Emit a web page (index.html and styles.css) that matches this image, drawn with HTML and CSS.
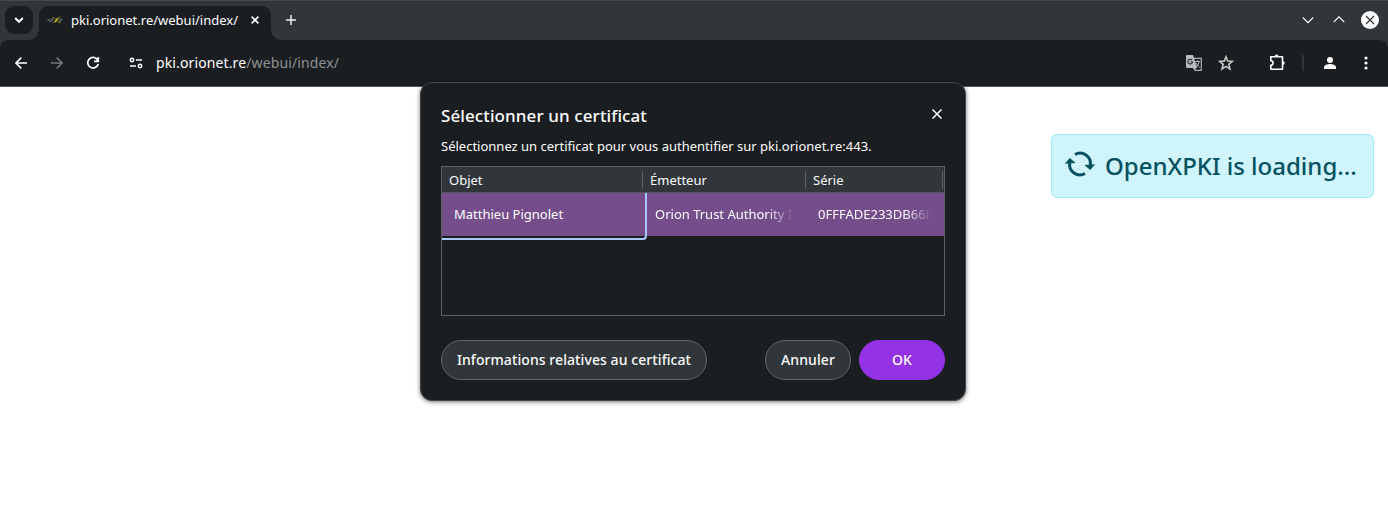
FILE: index.html
```
<!DOCTYPE html>
<html lang="fr">
<head>
<meta charset="utf-8">
<title>pki.orionet.re/webui/index/</title>
<link rel="stylesheet" href="styles.css">
</head>
<body>
<header class="tabstrip">
  <div class="tab-search"><svg width="10" height="8" viewBox="0 0 10 8"><path d="M1.2 2 5 5.8 8.8 2" fill="none" stroke="#fff" stroke-width="2"/></svg></div>
  <div class="tab">
    <svg class="favicon" width="16" height="16" viewBox="0 0 16 16" fill="none">
      <path d="M.5 8.300q2-2 4 0t-4 0M5 9V7.300h2M12 7.400h3.500M12 9h3" stroke="#666a6b"/>
      <path d="M5 5.500q3 0 4.500 2.500t4 3M6 10.800q2 0 4-3.300 1-2 3.500-2.500" stroke="#7b851c"/>
      <path d="m8 10 3-4" stroke="#c3b52c" stroke-width="1.500"/>
    </svg>
    <span class="tab-title">pki.orionet.re/webui/index/</span>
    <svg class="tab-close" width="8" height="8" viewBox="0 0 8 8"><path d="m.6.6 6.800 6.800M7.400.6.6 7.400" stroke="#fff" stroke-width="1.600"/></svg>
  </div>
  <svg class="new-tab" width="10" height="10" viewBox="0 0 10 10"><path d="M5 0v10M0 5h10" stroke="#f1f1f1" stroke-width="1.500"/></svg>
  <div class="window-buttons">
    <svg width="12" height="12" viewBox="0 0 12 12"><path d="M.8 3.500 6 8.700l5.200-5.200" fill="none" stroke="#fcfcfc" stroke-width="1.100"/></svg>
    <svg width="12" height="12" viewBox="0 0 12 12"><path d="M.8 8 6 2.800 11.200 8" fill="none" stroke="#fcfcfc" stroke-width="1.100"/></svg>
    <svg class="window-close" width="18" height="18" viewBox="0 0 18 18"><circle cx="9" cy="9" r="9" fill="#fcfcfc"/><path d="m5 5 8 8m0-8-8 8" stroke="#31363b" stroke-width="1.200"/></svg>
  </div>
</header>
<nav class="toolbar">
  <div class="toolbar-left">
    <svg width="16" height="16" viewBox="0 0 16 16"><path d="M14 8H3m5.300-5.400L2.900 8l5.400 5.400" fill="none" stroke="#fff" stroke-width="1.600"/></svg>
    <svg width="16" height="16" viewBox="0 0 16 16"><path d="M2 8h11M7.700 2.600 13.100 8l-5.400 5.400" fill="none" stroke="#747677" stroke-width="1.600"/></svg>
    <svg width="16" height="16" viewBox="0 0 16 16"><path d="M12.600 5A5.300 5.300 0 1 0 13.200 9M13.300 2v4.300H9" fill="none" stroke="#fff" stroke-width="1.700"/></svg>
    <svg class="site-icon" width="16" height="16" viewBox="0 0 16 16" fill="none" stroke="#fff" stroke-width="1.500"><circle cx="4" cy="5" r="1.700"/><circle cx="12" cy="11" r="1.700"/><path d="M8 5h6M2 11h6"/></svg>
    <div class="url">pki.orionet.re<span class="url-path">/webui/index/</span></div>
  </div>
  <div class="toolbar-right">
    <svg width="18" height="18" viewBox="0 0 18 18">
      <path d="M8 4.300h8.300v12H9.500" fill="none" stroke="#aeb0b1" stroke-width="1.200"/>
      <path d="M2 1h6l4.300 13H2a1 1 0 0 1-1-1V2a1 1 0 0 1 1-1z" fill="#b8babb"/>
      <path d="M7.200 6.200A2.400 2.400 0 1 0 7.600 8H5.300" fill="none" stroke="#292c2e" stroke-width="1.100"/>
      <path d="M10.300 7.500h5M12.800 6v1.500M14.300 7.500q-.8 3.500-3 5.500M11.200 9q1.500 3 3.600 4.300" fill="none" stroke="#aeb0b1"/>
      <path d="M7.700 14l2 2.300 1.500-2.300z" fill="#b8babb"/>
    </svg>
    <svg class="star" width="16" height="16" viewBox="0 0 16 16"><path d="m8 1.800 1.700 4.300 4.700.3-3.600 3 1.200 4.500L8 11.400l-4 2.500 1.200-4.500-3.600-3 4.700-.3z" fill="none" stroke="#c7c8c8" stroke-width="1.600"/></svg>
    <svg class="puzzle" width="18" height="18" viewBox="0 0 18 18"><path d="M2.800 2.800H14.500v12.400H2.800v-3.900a2.200 2.200 0 0 0 0-4.600z" fill="none" stroke="#fff" stroke-width="1.600" stroke-linejoin="round"/><path d="M6.700 2.500a1.900 1.900 0 0 1 3.800 0zM14.800 7.200a1.900 1.900 0 0 1 0 3.800z" fill="#fff"/></svg>
    <span class="divider"></span>
    <svg class="person" width="16" height="16" viewBox="0 0 16 16" fill="#fff"><circle cx="8" cy="5" r="3"/><path d="M2 14v-1.700c0-2.200 3.700-3.300 6-3.300s6 1.100 6 3.300V14z"/></svg>
    <svg class="menu" width="4" height="16" viewBox="0 0 4 16" fill="#fff"><circle cx="2" cy="3" r="1.600"/><circle cx="2" cy="8" r="1.600"/><circle cx="2" cy="13" r="1.600"/></svg>
  </div>
</nav>
<main class="page">
  <div class="loading">
    <svg width="32" height="32" viewBox="0 0 32 32"><path d="M11 6.500A10.300 10.300 0 0 1 26.300 17M21 25.500A10.300 10.300 0 0 1 5.700 15" fill="none" stroke="#055160" stroke-width="3"/><path d="m20.300 17 10.900-.8-5 5.800zM11.700 15 .8 15.800l5-5.800z" fill="#055160"/></svg>
    <span>OpenXPKI is loading...</span>
  </div>
</main>
<section class="dialog" role="dialog">
  <div class="dialog-head">
    <h1>Sélectionner un certificat</h1>
    <svg width="10" height="10" viewBox="0 0 10 10"><path d="m.5.5 9 9m0-9-9 9" stroke="#fff" stroke-width="1.500"/></svg>
  </div>
  <p class="message">Sélectionnez un certificat pour vous authentifier sur pki.orionet.re:443.</p>
  <div class="table">
    <div class="row head"><span>Objet</span><span>Émetteur</span><span>Série</span></div>
    <div class="row selected">
      <span class="cell focused">Matthieu Pignolet</span>
      <span class="cell"><span class="fade">Orion Trust Authority I</span></span>
      <span class="cell"><span class="fade">0FFFADE233DB66D</span></span>
    </div>
  </div>
  <div class="actions">
    <button class="info">Informations relatives au certificat</button>
    <button>Annuler</button>
    <button class="primary">OK</button>
  </div>
</section>
</body>
</html>
```
FILE: styles.css
```
* { box-sizing: border-box; }
html { background: #31363a; }
body { margin: 0; height: 510px; overflow: hidden; background: #fff; font-family: "Noto Sans", sans-serif; }
svg { display: block; flex: none; }
.tabstrip { display: flex; height: 40px; background: #31363a; border-top: 1px solid #3f4a53; padding: 5px 9px 0 5px; }
.tab-search { width: 28px; height: 28px; border-radius: 9px; background: #1b1e20; display: grid; place-items: center; }
.tab { position: relative; width: 232px; height: 34px; margin-left: 6px; padding: 0 12px 6px 8px; display: flex; align-items: center; background: #1b1e20; border-radius: 9px 9px 0 0; color: #fcfcfc; font-size: 13px; }
.tab::before, .tab::after { content: ""; position: absolute; bottom: 0; width: 10px; height: 10px; }
.tab::before { left: -10px; background: radial-gradient(circle at 0 0, transparent 9.500px, #1b1e20 10px); }
.tab::after { right: -10px; background: radial-gradient(circle at 100% 0, transparent 9.500px, #1b1e20 10px); }
.tab-title { margin-left: 8px; white-space: nowrap; }
.tab-close { margin-left: auto; }
.new-tab { margin: 9px 0 0 15px; }
.window-buttons { margin-left: auto; height: 28px; display: flex; align-items: center; gap: 19px; }
.window-close { margin-left: -3px; }
.toolbar { height: 47px; border-bottom: 1px solid #53575a; display: flex; justify-content: space-between; padding: 0 20px 0 13px; background: radial-gradient(circle at 8px 8px, #1b1e20 7.500px, #31363a 8px) 0 0 / 8px 8px no-repeat, radial-gradient(circle at 0 8px, #1b1e20 7.500px, #31363a 8px) 100% 0 / 8px 8px no-repeat, #1b1e20; }
.toolbar-left, .toolbar-right { display: flex; align-items: center; }
.toolbar-left { gap: 20px; }
.site-icon { margin-left: 7px; }
.url { margin-left: -8px; padding-bottom: 2px; font-size: 14px; letter-spacing: .12px; color: #fff; white-space: nowrap; }
.url-path { color: #8f9192; }
.star { margin-left: 15px; }
.puzzle { margin-left: 34px; }
.divider { width: 2px; height: 16px; margin-left: 16px; background: #31363a; }
.person { margin-left: 18px; }
.menu { margin-left: 26px; }
.page { display: flex; justify-content: flex-end; padding: 47px 14px 0; }
.loading { display: flex; width: 323px; height: 64px; padding: 0 0 0 12px; align-items: center; gap: 9px; background: #cff4fc; border: 1px solid #9eeaf9; border-radius: 6px; color: #055160; font-size: 24px; font-weight: 500; white-space: nowrap; }
.loading svg { margin-top: -4px; }
.loading span { padding-bottom: 2px; }
.dialog { position: absolute; left: 420px; top: 82px; width: 546px; height: 319px; padding: 20px; background: #1b1e20; border: 1px solid #454849; border-radius: 12px; color: #fcfcfc; box-shadow: 0 1px 4px rgba(0,0,0,.55); }
.dialog-head { display: flex; justify-content: space-between; height: 26px; }
.dialog-head h1 { margin: 0; font-size: 17px; line-height: 26px; font-weight: 500; letter-spacing: .1px; }
.dialog-head svg { margin: 6px 3px 0 0; }
.message { margin: 7px 0 10px; font-size: 13px; line-height: 20px; }
.table { height: 150px; border: 1px solid #5d6163; font-size: 13px; }
.row { display: grid; grid-template-columns: 201px 163px 138px; }
.head { height: 26px; background: #31363a; border-bottom: 1px solid #53575a; align-items: center; }
.head span { height: 18px; line-height: 18px; padding-left: 7px; border-right: 1px solid #5d6163; }
.head span:last-child { margin-right: 1px; }
.selected { height: 43px; background: #754d8a; }
.cell { min-width: 0; padding: 0 12px; line-height: 42px; white-space: nowrap; }
.focused { width: 205px; height: 47px; border: solid #a8c7fa; border-width: 0 2px 2px 0; border-radius: 0 0 4px 0; }
.fade { display: block; -webkit-mask-image: linear-gradient(90deg, #000 calc(100% - 27px), transparent); mask-image: linear-gradient(90deg, #000 calc(100% - 27px), transparent); }
.actions { display: flex; gap: 8px; margin-top: 24px; }
button { width: 86px; height: 40px; padding: 0 0 2px; border: 1px solid #606467; border-radius: 20px; background: #31363a; color: #fcfcfc; font: 500 14px "Noto Sans", sans-serif; letter-spacing: .08px; white-space: nowrap; }
.info { width: 266px; margin-right: auto; }
.primary { background: #9333e5; border-color: #9333e5; }
```
